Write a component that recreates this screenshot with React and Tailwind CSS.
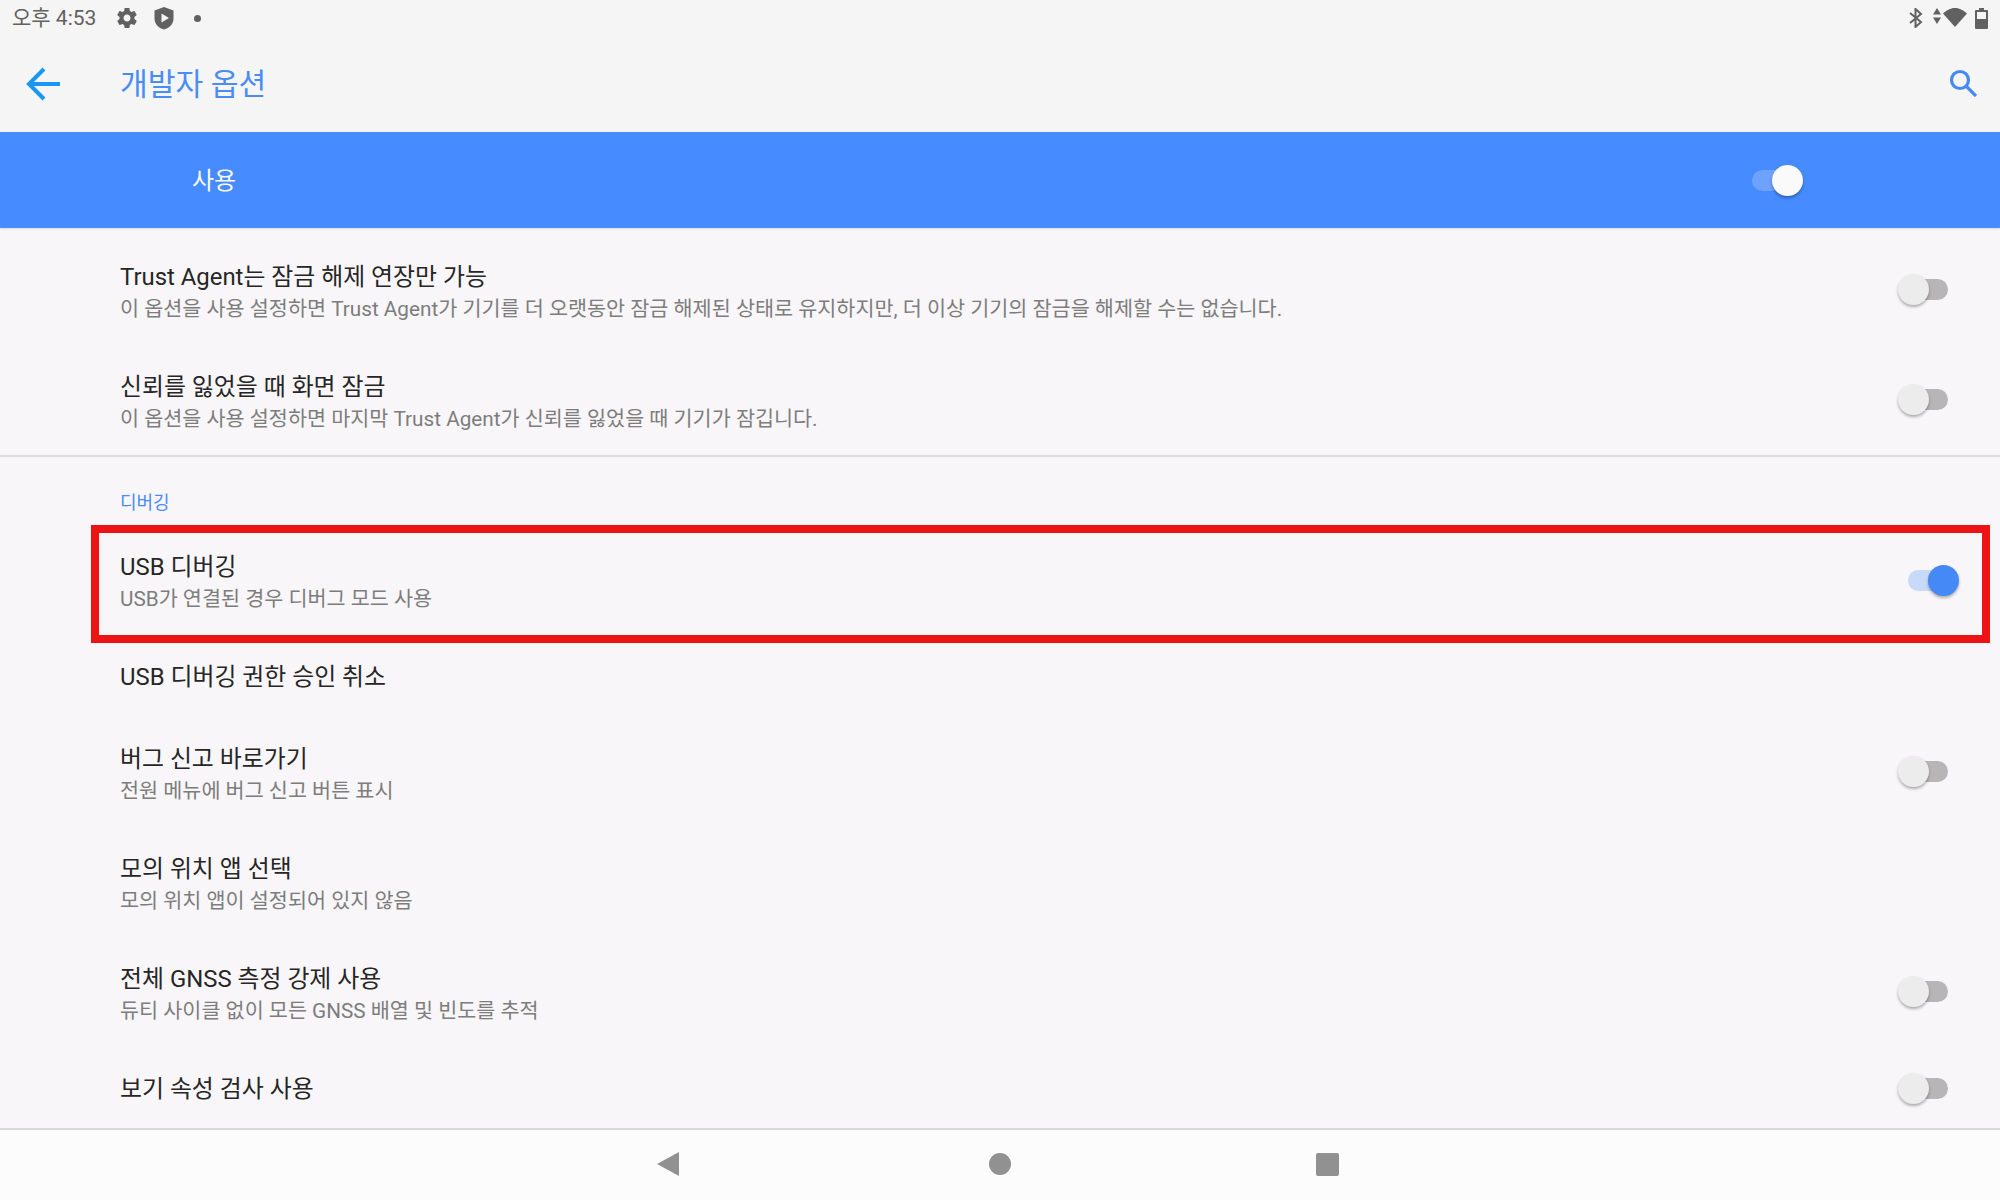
import React from "react";

function Toggle({ on, blueBar }) {
  const track = blueBar ? "bg-[#6da2ff]" : on ? "bg-[#c8daf9]" : "bg-[#b7b5b6]";
  const knob = blueBar ? "bg-[#fafafa] left-[20px]" : on ? "bg-[#4589f7] left-[20px]" : "bg-[#ececec] left-[-10px]";
  const offset = !blueBar && !on ? "mb-[2px]" : "";
  return (
    <div className={`relative w-[40px] h-[21px] shrink-0 ${offset}`}>
      <div className={`absolute inset-0 rounded-full ${track}`} />
      <div className={`absolute top-[-5px] w-[31px] h-[31px] rounded-full shadow-[0_2px_3px_rgba(0,0,0,0.3)] ${knob}`} />
    </div>
  );
}

function Row({ title, sub, toggle, on, className = "h-[110px]", children }) {
  return (
    <div className={`relative flex items-center pl-[120px] pr-[52px] ${className}`}>
      <div className={`flex-1 min-w-0 ${sub ? "pt-[4px]" : ""}`}>
        <div className="text-[23.9px] leading-[32px] text-[#262626] whitespace-nowrap">{title}</div>
        {sub && <div className="text-[20.72px] leading-[28px] mt-[2px] text-[#7d7d7d] whitespace-nowrap">{sub}</div>}
      </div>
      {toggle && <Toggle on={on} />}
      {children}
    </div>
  );
}

export default function App() {
  return (
    <div className="w-[2000px] h-[1200px] overflow-hidden flex flex-col bg-[#f8f6f8] font-['Roboto','Noto_Sans_CJK_KR',sans-serif]">
      <div className="bg-[#f5f5f5] h-[132px] shrink-0 flex flex-col">
        <div className="h-[36px] flex items-center pl-[12px] pr-[12px] text-[#616161]">
          <span className="text-[21px] leading-[36px] w-[103px]">오후 4:53</span>
          <svg width="24" height="24" viewBox="0 0 24 24" fill="#616161"><path d="M19.4 13c.04-.32.07-.65.07-1s-.03-.68-.07-1l2.1-1.65c.2-.15.25-.42.13-.64l-2-3.46c-.12-.22-.39-.3-.61-.22l-2.49 1c-.52-.4-1.08-.73-1.69-.98l-.38-2.65C14.46 2.18 14.25 2 14 2h-4c-.25 0-.46.18-.49.42l-.38 2.65c-.61.25-1.17.59-1.69.98l-2.49-1c-.23-.09-.49 0-.61.22l-2 3.46c-.13.22-.07.49.12.64L4.57 11c-.04.32-.07.66-.07 1s.03.68.07 1l-2.11 1.65c-.19.15-.24.42-.12.64l2 3.46c.12.22.39.3.61.22l2.49-1c.52.4 1.08.73 1.69.98l.38 2.65c.03.24.24.42.49.42h4c.25 0 .46-.18.49-.42l.38-2.65c.61-.25 1.17-.59 1.69-.98l2.49 1c.23.09.49 0 .61-.22l2-3.46c.12-.22.07-.49-.12-.64L19.4 13zM12 15.5c-1.93 0-3.5-1.57-3.5-3.500s1.570-3.500 3.500-3.500 3.500 1.570 3.500 3.500-1.570 3.500-3.500 3.500z" /></svg>
          <svg width="24" height="26" viewBox="0 0 24 26" fill="#616161" className="ml-[13px]"><path fillRule="evenodd" d="M12 2l9.500 3.400v8c0 5.600-3.900 9.400-9.500 11-5.600-1.600-9.500-5.400-9.500-11v-8L12 2zM9.500 8.500v9l7.500-4.500-7.500-4.500z" /></svg>
          <div className="w-[7px] h-[7px] rounded-full bg-[#616161] ml-[18px]" />
          <div className="flex-1" />
          <svg width="14" height="20" viewBox="0 0 14 20" fill="none" stroke="#616161" strokeWidth="2" className="mr-[-1px]"><path d="M1 5l11 9-5.500 5V1L12 6 1 15" /></svg>
          <svg width="8" height="16" viewBox="0 0 8 16" fill="#616161" className="ml-[11px] mb-[4px]"><path d="M4 0l4 6.500H0zM4 16L0 9.500h8z" /></svg>
          <svg width="24" height="19" viewBox="0 0 24 19" fill="#616161" className="ml-[2px] mb-[2px]"><path d="M12 19L0 5.500C3 2.500 7.300 0 12 0s9 2.500 12 5.500z" /></svg>
          <svg width="13" height="21" viewBox="0 0 13 21" className="ml-[8px]"><path fill="#616161" d="M4 0h5v2h3a1 1 0 0 1 1 1v17a1 1 0 0 1-1 1H1a1 1 0 0 1-1-1V3a1 1 0 0 1 1-1h3z" /><rect x="2" y="4" width="9" height="7" fill="#f5f5f5" /></svg>
        </div>
        <div className="flex-1 flex items-center pl-[26px] pr-[23px]">
          <svg width="34" height="34" viewBox="0 0 34 34" fill="none" stroke="#1a96f5" strokeWidth="4" className="mb-[1px]"><path d="M34 17H4M18 2L3 17l15 15" /></svg>
          <span className="ml-[60px] text-[30.2px] leading-[40px] pt-[2px] text-[#4a8cf7]">개발자 옵션</span>
          <div className="flex-1" />
          <svg width="28" height="28" viewBox="0 0 28 28" fill="none" stroke="#4589f7" strokeWidth="3.200" className="mb-[2px]"><circle cx="11" cy="11" r="8.500" /><path d="M17 17l10 10" /></svg>
        </div>
      </div>

      <div className="bg-[#468bff] h-[96px] shrink-0 flex items-center pl-[192px] pr-[208px] shadow-[0_1px_2px_rgba(0,0,0,0.12)]">
        <span className="flex-1 text-[24px] leading-[32px] pt-[2px] text-[#fafafa]">사용</span>
        <Toggle blueBar />
      </div>

      <div className="flex-1 min-h-0 overflow-hidden pt-[7px]">
        <Row toggle title="Trust Agent는 잠금 해제 연장만 가능" sub="이 옵션을 사용 설정하면 Trust Agent가 기기를 더 오랫동안 잠금 해제된 상태로 유지하지만, 더 이상 기기의 잠금을 해제할 수는 없습니다." />
        <Row toggle title="신뢰를 잃었을 때 화면 잠금" sub="이 옵션을 사용 설정하면 마지막 Trust Agent가 신뢰를 잃었을 때 기기가 잠깁니다." />
        <div className="h-[70px] border-t-2 border-[#dcdcdc] pl-[120px] pt-[34px] text-[18px] leading-[24px] text-[#4a8cf7]">디버깅</div>
        <Row toggle on title="USB 디버깅" sub="USB가 연결된 경우 디버그 모드 사용">
          <div className="absolute left-[91px] top-0 w-[1899px] h-[118px] border-[8px] border-[#ed1314] pointer-events-none" />
        </Row>
        <Row title="USB 디버깅 권한 승인 취소" className="h-[82px] pt-[2px]" />
        <Row toggle title="버그 신고 바로가기" sub="전원 메뉴에 버그 신고 버튼 표시" />
        <Row title="모의 위치 앱 선택" sub="모의 위치 앱이 설정되어 있지 않음" />
        <Row toggle title="전체 GNSS 측정 강제 사용" sub="듀티 사이클 없이 모든 GNSS 배열 및 빈도를 추적" />
        <Row toggle title="보기 속성 검사 사용" className="h-[84px]" />
      </div>

      <div className="h-[72px] shrink-0 bg-[#fcfcfc] border-t-2 border-[#d9d7d9] flex items-center justify-center pr-[4px] pb-[2px]">
        <svg width="23" height="24" viewBox="0 0 23 24" fill="#919191" className="mr-[309px]"><path d="M22 0v24L0 12z" /></svg>
        <div className="w-[22px] h-[22px] rounded-full bg-[#919191] mr-[305px]" />
        <div className="w-[23px] h-[23px] rounded-[2px] bg-[#919191]" />
      </div>
    </div>
  );
}
